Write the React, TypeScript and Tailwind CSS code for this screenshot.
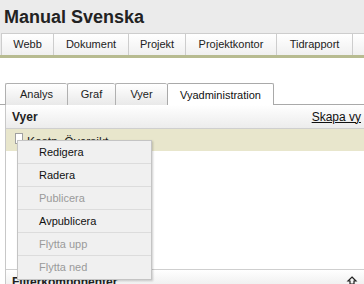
import React from "react";

const topTabs = [
  { label: "Webb", w: 52 },
  { label: "Dokument", w: 75 },
  { label: "Projekt", w: 57 },
  { label: "Projektkontor", w: 91 },
  { label: "Tidrapport", w: 76 },
  { label: "", w: 30 },
];

const subTabs = [
  { label: "Analys", w: 62, active: false },
  { label: "Graf", w: 48, active: false },
  { label: "Vyer", w: 52, active: false },
  { label: "Vyadministration", w: 107, active: true },
];

const menuItems = [
  { label: "Redigera", disabled: false },
  { label: "Radera", disabled: false },
  { label: "Publicera", disabled: true },
  { label: "Avpublicera", disabled: false },
  { label: "Flytta upp", disabled: true },
  { label: "Flytta ned", disabled: true },
];

export default function App() {
  return (
    <div
      className="relative w-[364px] h-[284px] overflow-hidden bg-white"
      style={{ fontFamily: '"Liberation Sans", Arial, sans-serif' }}
    >
      {/* Header */}
      <div className="bg-[#ebebeb] border-b-[3px] border-[#b7bb90]">
        <div className="pt-[6px] pl-[4px] h-[28px] text-[18px] leading-[22px] font-bold text-[#222]">
          Manual Svenska
        </div>
        <div className="flex mt-[5px] pl-[1px] h-[22px] items-end">
          {topTabs.map((t, i) => (
            <div
              key={i}
              className="shrink-0 h-[22px] flex items-center justify-center border-t border-l border-[#cdcdcd] bg-gradient-to-b from-white to-[#f0f0f0] text-[11px] text-[#222]"
              style={{ width: t.w }}
            >
              {t.label}
            </div>
          ))}
        </div>
      </div>

      {/* Sub tabs */}
      <div className="mt-[25px] flex h-[22px] border-b border-[#a9a9a9] pl-[5px]">
        {subTabs.map((t, i) => (
          <div
            key={i}
            className={
              t.active
                ? "shrink-0 h-[23px] flex items-center justify-center border border-b-0 border-[#a9a9a9] rounded-t-[2px] bg-white text-[11px] text-[#111]"
                : "shrink-0 h-[22px] flex items-center justify-center border-t border-l border-[#b0b0b0] rounded-t-[2px] bg-gradient-to-b from-white to-[#e9e9e9] text-[11px] text-[#222]"
            }
            style={{ width: t.w }}
          >
            {t.label}
          </div>
        ))}
      </div>

      {/* Panel */}
      <div className="ml-[5px] border-l border-[#c8c8c8] flex flex-col">
        <div className="h-[24px] flex items-center justify-between pl-[6px] pr-[3px] bg-gradient-to-b from-white to-[#ececec] border-b border-[#cfcfcf]">
          <span className="text-[12px] font-bold text-[#222]">Vyer</span>
          <span className="text-[12px] text-[#111] underline">Skapa vy</span>
        </div>
        <div className="h-[22px] bg-[#e8e6cc] flex items-start pl-[9px] pt-[4px] gap-[4px]">
          <div className="w-[8px] h-[11px] mt-[0px] border border-[#a0a0a0] bg-white" />
          <span className="text-[12px] leading-[14px] mt-[2px] text-[#222]">Kostn. Översikt</span>
        </div>
        <div className="h-[118px] bg-white" />
        <div className="h-[20px] border-t border-[#cfcfcf] bg-gradient-to-b from-white to-[#ececec] flex items-start justify-between pl-[6px] pr-[6px] pt-[3px]">
          <span className="text-[12px] font-bold text-[#222]">Filterkomponenter</span>
          <svg width="12" height="10" viewBox="0 0 12 10" className="mt-[3px]">
            <path d="M6 1 L10 5 L8 5 L8 8 L4 8 L4 5 L2 5 Z" fill="none" stroke="#222" strokeWidth="1.2" />
          </svg>
        </div>
      </div>

      {/* Context menu */}
      <div className="absolute left-[17px] top-[140px] w-[135px] bg-[#f0f0f0] border border-[#c4c4c4] shadow-[1px_1px_2px_rgba(0,0,0,0.2)]">
        {menuItems.map((m, i) => (
          <div
            key={i}
            className={
              "h-[23px] flex items-center pl-[21px] text-[11px] " +
              (i < menuItems.length - 1 ? "border-b border-[#dcdcdc] " : "") +
              (m.disabled ? "text-[#9a9a9a]" : "text-[#111]")
            }
          >
            {m.label}
          </div>
        ))}
      </div>
    </div>
  );
}
